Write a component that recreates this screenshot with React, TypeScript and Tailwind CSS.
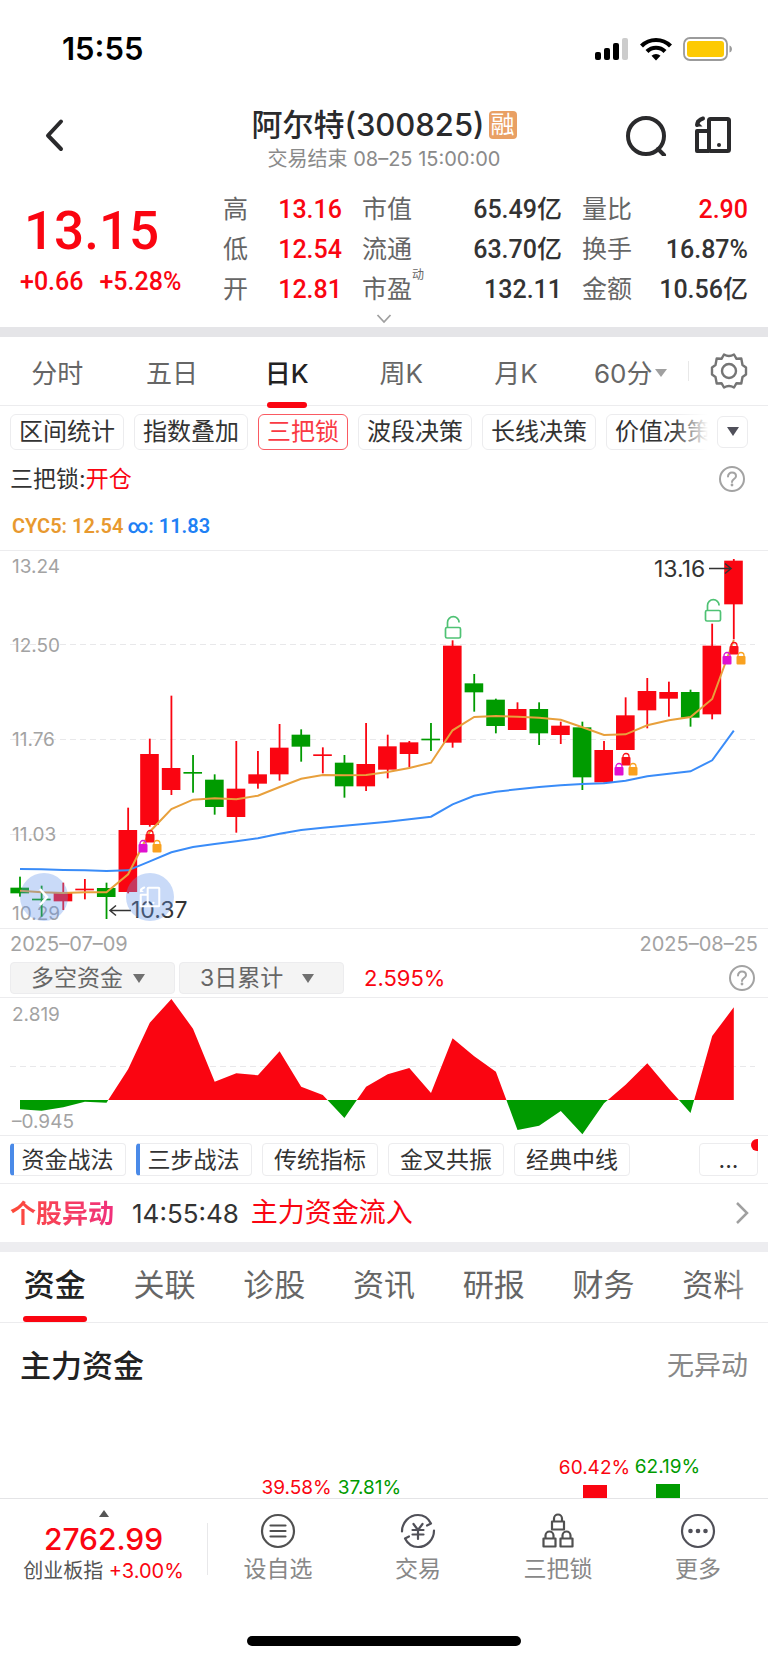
import { useState } from 'react';

type Candle = [color: 'r' | 'g', high: number, low: number, top: number, bottom: number];

const RED = '#fa0511';
const GREEN = '#009b00';

const stats = [
    ['高', '13.16', '市值', '65.49亿', '量比', '2.90'],
    ['低', '12.54', '流通', '63.70亿', '换手', '16.87%'],
    ['开', '12.81', '市盈', '132.11', '金额', '10.56亿'],
];

const periods = ['分时', '五日', '日K', '周K', '月K', '60分'];
const indicators = ['区间统计', '指数叠加', '三把锁', '波段决策', '长线决策', '价值决策'];
const strategies = ['资金战法', '三步战法', '传统指标', '金叉共振', '经典中线'];
const sections = ['资金', '关联', '诊股', '资讯', '研报', '财务', '资料'];

// values are in thirds of a chart unit, see chartY
const candles: Candle[] = [
    ['g', 1010, 1070, 1043, 1060],
    ['g', 1037, 1130, 1076, 1081],
    ['r', 1028, 1110, 1057, 1084],
    ['r', 1017, 1078, 1046, 1051],
    ['g', 1028, 1137, 1044, 1071],
    ['r', 803, 1060, 870, 1056],
    ['r', 596, 860, 642, 855],
    ['r', 467, 765, 684, 750],
    ['g', 645, 758, 696, 701],
    ['g', 703, 824, 719, 801],
    ['r', 603, 878, 746, 831],
    ['r', 633, 746, 703, 731],
    ['r', 552, 722, 623, 703],
    ['g', 568, 665, 584, 620],
    ['r', 622, 700, 643, 648],
    ['g', 645, 773, 668, 739],
    ['r', 549, 753, 672, 739],
    ['r', 584, 715, 619, 689],
    ['r', 603, 682, 607, 642],
    ['g', 549, 633, 596, 601],
    ['r', 301, 623, 317, 608],
    ['g', 402, 515, 430, 457],
    ['g', 476, 580, 479, 558],
    ['r', 487, 570, 507, 570],
    ['g', 487, 615, 507, 580],
    ['r', 545, 612, 557, 585],
    ['g', 545, 750, 562, 712],
    ['r', 603, 727, 630, 727],
    ['r', 472, 630, 526, 630],
    ['r', 414, 565, 453, 511],
    ['r', 425, 530, 456, 476],
    ['g', 449, 560, 456, 533],
    ['r', 251, 538, 317, 523],
    ['r', 57, 298, 62, 193],
];

const shortLine = [
    1052, 1057, 1059, 1057, 1057, 1003, 875, 807, 779, 775, 778, 767, 741, 716, 705, 706, 705,
    696, 684, 668, 571, 531, 528, 530, 533, 539, 562, 585, 583, 556, 541, 531, 477, 300,
];

const longLine = [
    987, 988, 990, 991, 993, 991, 964, 937, 921, 912, 904, 895, 881, 870, 863, 857, 851,
    845, 838, 830, 793, 767, 755, 748, 741, 736, 732, 730, 722, 709, 701, 694, 661, 572,
];

const fundFlow = [
    508, 512, 502, 485, 488, 388, 248, 177, 266, 425, 400, 406, 334, 440, 465, 534, 440,
    403, 384, 459, 295, 349, 395, 570, 557, 513, 583, 490, 434, 370, 446, 519, 288, 202,
];

const chartX = (i: number) => 20 + i * 21.63;
const chartY = (v: number) => v / 3 - 11;
const flowY = (v: number) => v / 3 - 58;

const toPoints = (values: number[], y: (v: number) => number) =>
    values.map((v, i) => `${chartX(i).toFixed(1)},${y(v).toFixed(1)}`).join(' ');

function HelpIcon() {
    return (
        <svg width="28" height="28" viewBox="0 0 28 28" fill="none" stroke="#a3a3a3" strokeWidth="2">
            <circle cx="14" cy="14" r="12" />
            <path d="M10 11.5c0-2.4 1.7-3.9 4-3.9s4 1.4 4 3.6c0 2.7-4 3-4 5.8" strokeLinecap="round" />
            <circle cx="14" cy="20" r="1.4" fill="#a3a3a3" stroke="none" />
        </svg>
    );
}

function PhoneIcon({ size, color, width }: { size: number; color: string; width: number }) {
    return (
        <svg width={size} height={size} viewBox="0 0 38 38" fill="none" stroke={color} strokeWidth={width} strokeLinejoin="round">
            <rect x="15" y="3" width="20" height="32" rx="1.5" />
            <path d="M15 15H3v20h12" />
            <path d="M9 2.500C5.500 3.500 3.500 5.500 3 9" strokeLinecap="round" />
            <path d="M2 4v6.500h6.500z" fill={color} stroke="none" />
            <circle cx="25" cy="29" r="2" fill={color} stroke="none" />
        </svg>
    );
}

function ClosedLock({ x, y, color }: { x: number; y: number; color: string }) {
    return (
        <g transform={`translate(${x} ${y})`}>
            <path d="M-3 5V3.500a3 3 0 0 1 6 0V5" fill="none" stroke={color} strokeWidth="1.3" />
            <rect x="-4.500" y="4" width="9" height="8.500" rx="1" fill={color} />
        </g>
    );
}

function TripleLock({ x, y }: { x: number; y: number }) {
    return (
        <g>
            <ClosedLock x={x} y={y} color="#fb1018" />
            <ClosedLock x={x - 7} y={y + 10} color="#e010d0" />
            <ClosedLock x={x + 7} y={y + 10} color="#f9a11f" />
        </g>
    );
}

function OpenLock({ x, y }: { x: number; y: number }) {
    return (
        <g transform={`translate(${x} ${y})`} fill="none" stroke="#4fc274" strokeWidth="1.700">
            <rect x="-7.500" y="11.500" width="15" height="10.500" rx="1.500" />
            <path d="M-5.500 11.500V6.500a5.800 5.800 0 0 1 11.600 0" />
        </g>
    );
}

function StatusBar() {
    return (
        <div className="flex h-[98px] items-center justify-between pr-[35px] pl-[62px]">
            <span className="text-[31px] leading-9 font-semibold text-black">15:55</span>
            <div className="flex items-center gap-[11px]">
                <svg width="34" height="24" viewBox="0 0 34 24">
                    <rect x="0" y="15" width="6" height="8" rx="2" />
                    <rect x="9" y="11" width="6" height="12" rx="2" />
                    <rect x="18" y="6" width="6" height="17" rx="2" />
                    <rect x="27" y="1" width="6" height="22" rx="2" fill="#cccccc" />
                </svg>
                <svg width="32" height="24" viewBox="0 0 32 24" fill="none" stroke="#000" strokeWidth="4.200">
                    <path d="M1.500 9a20.500 20.500 0 0 1 29 0" />
                    <path d="M7 14.500a12.700 12.700 0 0 1 18 0" />
                    <path d="M11.500 18.800a6.500 6.500 0 0 1 9 0L16 23.500z" fill="#000" stroke="none" />
                </svg>
                <svg width="50" height="24" viewBox="0 0 50 24">
                    <rect x="1" y="1" width="43" height="22" rx="6" fill="none" stroke="#9b9b9b" strokeWidth="1.800" />
                    <rect x="4" y="4" width="37" height="16" rx="3" fill="#fdca03" />
                    <path d="M46.500 8.500c3.300 1 3.300 6 0 7z" fill="#9b9b9b" />
                </svg>
            </div>
        </div>
    );
}

function Header() {
    return (
        <header className="grid h-[92px] grid-cols-[1fr_auto_1fr] items-start pt-[7px]">
            <button type="button" aria-label="返回" className="mt-[13px] ml-10 w-8">
                <svg width="28" height="34" viewBox="0 0 28 34" fill="none" stroke="#2a2a2c" strokeWidth="4" strokeLinecap="round" strokeLinejoin="round">
                    <path d="M21 3.500 8 17.500l13 13.500" />
                </svg>
            </button>
            <div className="text-center">
                <h1 className="flex h-10 items-center gap-1 text-[31px] font-medium text-[#2a2a2c]">
                    阿尔特(300825)
                    <span className="flex h-7 w-7 items-center justify-center rounded bg-[#e9a064] text-2xl leading-7 font-normal text-white">融</span>
                </h1>
                <p className="mt-0.5 text-xl leading-6 text-[#8a8a8a]">交易结束 08–25 15:00:00</p>
            </div>
            <div className="mt-[9px] mr-9 flex items-center justify-end gap-[27px]">
                <button type="button" aria-label="搜索">
                    <svg width="42" height="42" viewBox="0 0 42 42" fill="none" stroke="#2a2a2c" strokeWidth="4" strokeLinecap="round">
                        <circle cx="21" cy="22" r="18" />
                        <path d="m33 35 6 6" />
                    </svg>
                </button>
                <button type="button" aria-label="横屏">
                    <PhoneIcon size={38} color="#2a2a2c" width={4} />
                </button>
            </div>
        </header>
    );
}

function Quote() {
    return (
        <section className="font-['Roboto','Noto_Sans_CJK_SC',sans-serif]">
            <div className="flex h-[120px] pr-5">
                <div className="w-[223px] shrink-0 pl-5 font-medium text-[#fa0511]">
                    <p className="mt-2 pl-1 text-[53px] leading-[66px]">13.15</p>
                    <p className="mt-0.5 flex gap-4 text-[25px] leading-8">
                        <span>+0.66</span>
                        <span>+5.28%</span>
                    </p>
                </div>
                <table className="flex-1 text-[25px] leading-10">
                    <tbody>
                        {stats.map((row, index) => (
                            <tr key={row[0]}>
                                <th className="w-[34px] text-left font-normal text-[#666]">{row[0]}</th>
                                <td className="text-right font-medium text-[#fa0511]">{row[1]}</td>
                                <th className="w-[92px] pl-5 text-left font-normal whitespace-nowrap text-[#666]">
                                    <span className="relative">
                                        {row[2]}
                                        {index === 2 && <span className="absolute -top-2 left-full text-xs">动</span>}
                                    </span>
                                </th>
                                <td className="w-[128px] text-right font-medium text-[#333]">{row[3]}</td>
                                <th className="w-[71px] pl-5 text-left font-normal whitespace-nowrap text-[#666]">{row[4]}</th>
                                <td className={index === 0 ? 'w-[115px] text-right font-medium text-[#fa0511]' : 'w-[115px] text-right font-medium text-[#333]'}>
                                    {row[5]}
                                </td>
                            </tr>
                        ))}
                    </tbody>
                </table>
            </div>
            <button type="button" aria-label="展开" className="flex h-[17px] w-full items-center justify-center">
                <svg width="16" height="10" viewBox="0 0 16 10" fill="none" stroke="#a0a0a0" strokeWidth="1.800">
                    <path d="m1.500 1 6.500 7 6.500-7" />
                </svg>
            </button>
        </section>
    );
}

function PeriodTabs() {
    const [active, setActive] = useState('日K');

    return (
        <nav className="flex h-[69px] items-center border-b border-[#ececee]">
            <div className="grid h-full flex-1 grid-cols-6">
                {periods.map((period) => (
                    <button
                        key={period}
                        type="button"
                        onClick={() => setActive(period)}
                        className="relative flex items-center justify-center gap-[3px] pt-1 text-[26px] text-[#666]"
                    >
                        {period === active ? <span className="font-medium text-[#222]">{period}</span> : period}
                        {period === '60分' && (
                            <svg width="12" height="8" viewBox="0 0 12 8" fill="#a0a0a0">
                                <path d="M0 0h12L6 8z" />
                            </svg>
                        )}
                        {period === active && <span className="absolute -bottom-[3px] left-1/2 h-[6px] w-10 -translate-x-1/2 rounded-full bg-[#fa0511]" />}
                    </button>
                ))}
            </div>
            <button type="button" aria-label="设置" className="flex h-5 w-20 items-center justify-center border-l border-[#e8e8e8]">
                <svg width="38" height="38" viewBox="0 0 38 38" fill="none" stroke="#757575" strokeWidth="2.400" strokeLinejoin="round">
                    <path d="M14 2.500Q19 5.500 24 2.500l2.500 4.300 4.800-.3L32.500 13l3.500 2.500v7L32.500 25l-1.200 6.500-4.800-.3L24 35.500Q19 32.500 14 35.500l-2.500-4.300-4.800.3L5.500 25 2 22.500v-7L5.500 13l1.200-6.500 4.800.3z" />
                    <circle cx="19" cy="19" r="7" />
                </svg>
            </button>
        </nav>
    );
}

function IndicatorBar() {
    const [active, setActive] = useState('三把锁');

    return (
        <>
            <div className="flex h-[51px] items-center justify-between pr-5 pl-[10px]">
                <div className="relative w-[698px] overflow-hidden">
                    <div className="flex gap-[10px]">
                        {indicators.map((name) => (
                            <button
                                key={name}
                                type="button"
                                onClick={() => setActive(name)}
                                className={
                                    name === active
                                        ? 'h-9 shrink-0 rounded-md border border-[#fa5a62] px-2 text-2xl leading-8 text-[#fa3a44]'
                                        : 'h-9 shrink-0 rounded-md border border-[#ececee] px-2 text-2xl leading-8 text-[#333]'
                                }
                            >
                                {name}
                            </button>
                        ))}
                    </div>
                    <div className="pointer-events-none absolute inset-y-0 right-0 w-9 bg-linear-to-r from-white/0 to-white" />
                </div>
                <button type="button" aria-label="更多指标" className="flex h-8 w-[31px] shrink-0 items-center justify-center rounded-md border border-[#ececee]">
                    <svg width="12" height="9" viewBox="0 0 12 9" fill="#50505a">
                        <path d="M0 0h12L6 9z" />
                    </svg>
                </button>
            </div>
            <div className="flex h-11 items-center justify-between pr-[22px] pl-[10px] text-[23px] text-[#333]">
                <p>
                    三把锁:<span className="text-[#fa0511]">开仓</span>
                </p>
                <button type="button" aria-label="说明">
                    <HelpIcon />
                </button>
            </div>
            <p className="flex h-[49px] items-center gap-1 pl-3 font-['Roboto','Noto_Sans_CJK_SC',sans-serif] text-xl font-semibold text-[#e8992f]">
                CYC5: 12.54 <span className="text-[#2080f5]">∞: 11.83</span>
            </p>
        </>
    );
}

function PriceChart() {
    return (
        <section className="relative border-y border-[#ececee]">
            <svg viewBox="0 0 768 377" className="block w-full">
                {[93, 188, 283].map((y) => (
                    <line key={y} x1="10" x2="755" y1={y + 0.5} y2={y + 0.5} stroke="#e8e8ea" strokeDasharray="6 4" />
                ))}
                <g className="fill-[#a3a3a3] text-[19px]">
                    <text x="12" y="22">13.24</text>
                    <text x="12" y="101">12.50</text>
                    <text x="12" y="195">11.76</text>
                    <text x="12" y="290">11.03</text>
                    <text x="12" y="369">10.29</text>
                </g>
                {candles.map(([color, high, low, top, bottom], i) => (
                    <g key={i} fill={color === 'r' ? RED : GREEN}>
                        <rect x={chartX(i) - 0.9} y={chartY(high)} width="1.800" height={(low - high) / 3} />
                        <rect x={chartX(i) - 9.6} y={chartY(top)} width="18.600" height={(bottom - top) / 3} />
                    </g>
                ))}
                <polyline points={toPoints(longLine, chartY)} fill="none" stroke="#3a8cf8" strokeWidth="2" />
                <polyline points={toPoints(shortLine, chartY)} fill="none" stroke="#e8a03c" strokeWidth="2" />
                <TripleLock x={150} y={279} />
                <TripleLock x={626} y={202} />
                <TripleLock x={734} y={91} />
                <OpenLock x={453} y={65} />
                <OpenLock x={713} y={48} />
                <g fill="none" stroke="#333" strokeWidth="1.500">
                    <path d="M709 17.500h22m-6-5 6 5-6 5" />
                    <path d="M131 359.500h-21m6-5-6 5 6 5" />
                </g>
                <g className="fill-[#333] text-[23px]">
                    <text x="654" y="26">13.16</text>
                    <text x="131" y="367">10.37</text>
                </g>
            </svg>
            <button type="button" aria-label="后移" className="absolute bottom-[7px] left-5 flex h-12 w-12 items-center justify-center rounded-full bg-[#6496eb]/35">
                <svg width="12" height="20" viewBox="0 0 12 20" fill="none" stroke="#fff" strokeWidth="2.500">
                    <path d="m2 2 7 8-7 8" />
                </svg>
            </button>
            <button type="button" aria-label="横屏查看" className="absolute bottom-[7px] left-[126px] flex h-12 w-12 items-center justify-center rounded-full bg-[#6496eb]/35">
                <PhoneIcon size={22} color="#fff" width={3.5} />
            </button>
        </section>
    );
}

function Picker({ label, options }: { label: string; options: string[] }) {
    return (
        <div className="relative">
            <select
                aria-label={label}
                className="block h-8 w-[165px] appearance-none rounded border border-[#ececee] bg-[#f4f4f4] pl-5 text-[23px] leading-7 text-[#666]"
            >
                {options.map((option) => (
                    <option key={option}>{option}</option>
                ))}
            </select>
            <svg width="12" height="9" viewBox="0 0 12 9" fill="#707070" className="pointer-events-none absolute top-3 right-[30px]">
                <path d="M0 0h12L6 9z" />
            </svg>
        </div>
    );
}

function FundChart() {
    const area = `${chartX(0)},${flowY(480)} ${toPoints(fundFlow, flowY)} ${chartX(33)},${flowY(480)}`;

    return (
        <section>
            <div className="flex h-[30px] items-center justify-between px-[10px] text-xl text-[#a3a3a3]">
                <span>2025–07–09</span>
                <span>2025–08–25</span>
            </div>
            <div className="flex h-[38px] items-center gap-1 pr-3 pl-[10px]">
                <Picker label="指标" options={['多空资金', '主力资金']} />
                <Picker label="周期" options={['3日累计', '5日累计']} />
                <span className="ml-4 flex-1 text-[22px] text-[#fa0511]">2.595%</span>
                <button type="button" aria-label="说明">
                    <HelpIcon />
                </button>
            </div>
            <div className="border-y border-[#ececee]">
                <svg viewBox="0 0 768 137" className="block w-full">
                    <clipPath id="inflow">
                        <rect width="768" height="102" />
                    </clipPath>
                    <clipPath id="outflow">
                        <rect y="102" width="768" height="35" />
                    </clipPath>
                    <line x1="10" x2="755" y1="68.500" y2="68.500" stroke="#e8e8ea" strokeDasharray="6 4" />
                    <polygon points={area} fill={RED} clipPath="url(#inflow)" />
                    <polygon points={area} fill={GREEN} clipPath="url(#outflow)" />
                    <g className="fill-[#a3a3a3] text-[19px]">
                        <text x="12" y="23">2.819</text>
                        <text x="12" y="130">–0.945</text>
                    </g>
                </svg>
            </div>
        </section>
    );
}

function StrategyBar() {
    return (
        <div className="flex h-12 items-center gap-[10px] border-b border-[#ececee] px-[10px]">
            {strategies.map((name, index) => (
                <button
                    key={name}
                    type="button"
                    className={
                        index < 2
                            ? 'h-[33px] w-[116px] rounded border border-l-4 border-[#ececee] border-l-[#4a8ae8] pr-1 text-[23px] leading-7 text-[#333]'
                            : 'h-[33px] w-[116px] rounded border border-[#ececee] text-[23px] leading-7 text-[#333]'
                    }
                >
                    {name}
                </button>
            ))}
            <div className="relative ml-auto overflow-x-clip">
                <button type="button" aria-label="更多战法" className="block h-[33px] w-[59px] rounded border border-[#ececee] text-[23px] leading-7 text-[#333]">
                    ...
                </button>
                <span className="absolute -top-1 -right-[5px] h-3 w-3 rounded-full bg-[#fa0511]" />
            </div>
        </div>
    );
}

function SectionTabs() {
    const [active, setActive] = useState('资金');

    return (
        <nav className="relative grid h-[71px] grid-cols-7 border-b border-[#ececee]">
            {sections.map((section) => (
                <button key={section} type="button" onClick={() => setActive(section)} className="relative pb-1 text-[31px] leading-10 text-[#666]">
                    {section === active ? <span className="font-medium text-[#222]">{section}</span> : section}
                    {section === active && <span className="absolute bottom-0 left-1/2 h-[6px] w-16 -translate-x-1/2 rounded-full bg-[#fa0511]" />}
                </button>
            ))}
            <div className="pointer-events-none absolute inset-y-0 right-0 w-10 bg-linear-to-r from-white/0 to-white/80" />
        </nav>
    );
}

function MainFunds() {
    return (
        <section className="flex h-[175px] flex-col justify-between overflow-hidden">
            <div className="flex h-[86px] items-center justify-between px-5">
                <h2 className="text-[31px] font-medium text-[#222]">主力资金</h2>
                <span className="text-[27px] text-[#888]">无异动</span>
            </div>
            <div className="flex items-end justify-between pr-16 pl-[260px] text-[19px] leading-5">
                <div className="flex">
                    <span className="w-[73px] text-center text-[#fa0511]">39.58%</span>
                    <span className="w-[73px] text-center text-[#009b00]">37.81%</span>
                </div>
                <div className="flex items-end">
                    <div className="flex w-[73px] flex-col items-center gap-[7px] text-[#fa0511]">
                        60.42%
                        <span className="h-[13px] w-6 bg-[#fa0511]" />
                    </div>
                    <div className="flex w-[73px] flex-col items-center gap-[7px] text-[#009b00]">
                        62.19%
                        <span className="h-[14px] w-6 bg-[#009b00]" />
                    </div>
                </div>
            </div>
        </section>
    );
}

const smallLock = 'M-4 0v-3a4 4 0 0 1 8 0v3M-6 0H6v8H-6z';

function BottomBar() {
    return (
        <footer className="border-t border-[#e4e4e6]">
            <div className="flex h-[100px]">
                <button type="button" className="flex w-[207px] flex-col items-center pt-[11px]">
                    <svg width="10" height="7" viewBox="0 0 10 7" fill="#555">
                        <path d="M5 0l5 7H0z" />
                    </svg>
                    <span className="mt-1 text-[30px] leading-9 font-medium text-[#fa0511]">2762.99</span>
                    <span className="mt-0.5 text-xl leading-6 whitespace-nowrap text-[#555]">
                        创业板指 <span className="text-[#fa0511]">+3.00%</span>
                    </span>
                </button>
                <div className="my-6 w-px bg-[#e8e8ea]" />
                <div className="grid flex-1 grid-cols-4 text-[23px] leading-8 text-[#888]">
                    <button type="button" className="flex flex-col items-center gap-1 pt-[14px]">
                        <svg width="36" height="36" viewBox="0 0 36 36" fill="none" stroke="#505050" strokeWidth="2.200" strokeLinecap="round">
                            <circle cx="18" cy="18" r="16" />
                            <path d="M10.500 12.500h15M10.500 18h15M10.500 23.500h15" />
                        </svg>
                        设自选
                    </button>
                    <button type="button" className="flex flex-col items-center gap-1 pt-[14px]">
                        <svg width="36" height="36" viewBox="0 0 36 36" fill="none" stroke="#505058" strokeWidth="2.200" strokeLinecap="round" strokeLinejoin="round">
                            <path d="M2 18.500C2 9.500 9 2 18 2c5.500 0 10.500 3.500 13 8.500l-4 2" />
                            <path d="M34 17.500C34 26.500 27 34 18 34c-5.500 0-10.500-3.500-13-8.500l4-2" />
                            <path d="m13.500 11 4.500 6 4.500-6M12.500 17h11M12.500 21.500h11M18 17v9" />
                        </svg>
                        交易
                    </button>
                    <button type="button" className="flex flex-col items-center gap-1 pt-[14px]">
                        <svg width="36" height="36" viewBox="0 0 36 36" fill="none" stroke="#505050" strokeWidth="2.200" strokeLinejoin="round">
                            <path transform="translate(18 8.500)" d={smallLock} />
                            <path transform="translate(9.500 25.500)" d={smallLock} />
                            <path transform="translate(26.500 25.500)" d={smallLock} />
                        </svg>
                        三把锁
                    </button>
                    <button type="button" className="flex flex-col items-center gap-1 pt-[14px]">
                        <svg width="36" height="36" viewBox="0 0 36 36" fill="none" stroke="#505058" strokeWidth="2.200">
                            <circle cx="18" cy="18" r="16" />
                            <g fill="#505058" stroke="none">
                                <circle cx="10.500" cy="18" r="2.300" />
                                <circle cx="18" cy="18" r="2.300" />
                                <circle cx="25.500" cy="18" r="2.300" />
                            </g>
                        </svg>
                        更多
                    </button>
                </div>
            </div>
            <div className="mx-auto mt-[37px] mb-4 h-[10px] w-[274px] rounded-full bg-black" />
        </footer>
    );
}

export default function App() {
    return (
        <div className="w-full bg-white font-['Inter','Noto_Sans_CJK_SC',sans-serif]">
            <StatusBar />
            <Header />
            <Quote />
            <div className="h-[10px] bg-[#e5e5e8]" />
            <PeriodTabs />
            <IndicatorBar />
            <PriceChart />
            <FundChart />
            <StrategyBar />
            <a href="#alerts" className="flex h-[58px] items-center pr-[18px] pl-[10px]">
                <span className="bg-linear-to-r from-[#fd4a35] to-[#f0307c] bg-clip-text text-[26px] font-bold text-transparent">个股异动</span>
                <span className="ml-[18px] text-[26px] text-[#333]">14:55:48</span>
                <span className="ml-3 flex-1 text-[27px] text-[#fa0511]">主力资金流入</span>
                <svg width="16" height="24" viewBox="0 0 16 24" fill="none" stroke="#a0a0a0" strokeWidth="2.500">
                    <path d="m3 2 10 10L3 22" />
                </svg>
            </a>
            <div className="h-[10px] bg-[#ededf0]" />
            <SectionTabs />
            <MainFunds />
            <BottomBar />
        </div>
    );
}
